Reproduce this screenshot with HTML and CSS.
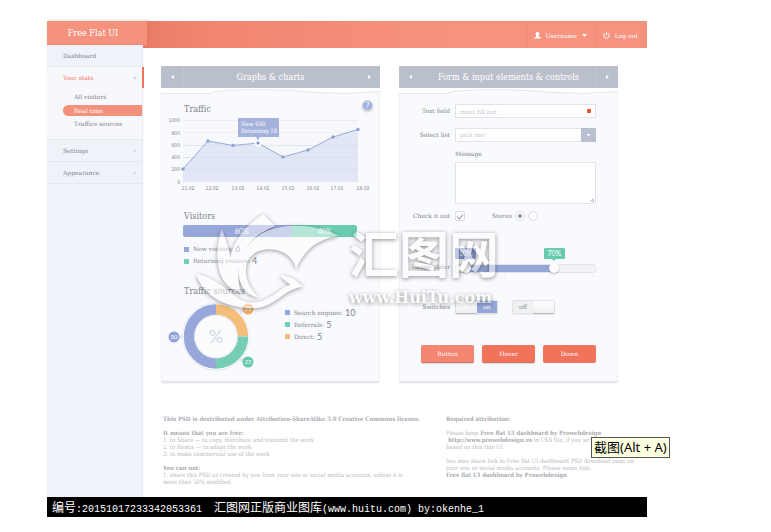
FILE: index.html
```html
<!DOCTYPE html>
<html lang="en">
<head>
<meta charset="utf-8">
<title>Free Flat UI</title>
<link rel="stylesheet" href="styles.css">
</head>
<body>
<div class="app">
  <header class="topbar">
    <a class="brand" href="#">Free Flat UI</a>
    <nav class="account" aria-label="Account">
      <a href="#">
        <svg width="7" height="7" viewBox="0 0 14 14"><path fill="#fff" d="M7 0c2.600 0 3.600 1.700 3.600 3.800S9.400 7.500 9 8.500c0 1 5 1.200 5 4.500H0c0-3.300 5-3.500 5-4.500-.400-1-1.600-2.600-1.600-4.700S4.400 0 7 0z"/></svg>
        Username
        <svg class="caret" width="5" height="3" viewBox="0 0 5 3"><path fill="#fff" d="M0 0h5L2.500 3z"/></svg>
      </a>
      <a href="#">
        <svg width="7" height="7" viewBox="0 0 14 14"><path d="M4 2.500a5.500 5.500 0 1 0 6 0M7 0v6.500" fill="none" stroke="#fff" stroke-width="2"/></svg>
        Log out
      </a>
    </nav>
  </header>

  <div class="body">
    <nav class="sidebar" aria-label="Main">
      <a class="item" href="#">Dashboard</a>
      <div class="group">
        <a class="item current" href="#">Your stats
          <svg width="4" height="3" viewBox="0 0 4 3"><path fill="#d3d6df" d="M0 0h4L2 3z"/></svg>
        </a>
        <a class="sub" href="#">All visitors</a>
        <a class="sub active" href="#">Real time</a>
        <a class="sub" href="#">Traffics sources</a>
      </div>
      <a class="item" href="#">Settings
        <svg width="3" height="4" viewBox="0 0 3 4"><path fill="#cdd1db" d="M0 0l2 2-2 2z"/></svg>
      </a>
      <a class="item" href="#">Appearance
        <svg width="3" height="4" viewBox="0 0 3 4"><path fill="#cdd1db" d="M0 0l2 2-2 2z"/></svg>
      </a>
    </nav>

    <main class="main">
      <div class="cards">
        <section class="card">
          <header class="card-head">
            <button aria-label="Previous"><svg width="3" height="4" viewBox="0 0 3 4"><path fill="#fff" d="M3 0v4L0 2z"/></svg></button>
            <h2>Graphs &amp; charts</h2>
            <button aria-label="Next"><svg width="3" height="4" viewBox="0 0 3 4"><path fill="#fff" d="M0 0v4l3-2z"/></svg></button>
          </header>
          <svg class="torn" viewBox="0 0 219 7" preserveAspectRatio="none"><path fill="#fff" d="M0 0h219v5l-30 1-30-1q-50-4-105 0l-6 1H0z"/><path fill="none" stroke="#e4e6eb" d="M0 5.500h48l6-2q50-4 100 1l30 1 35-2"/></svg>
          <div class="graphs">
            <div class="title-row">
              <h3>Traffic</h3>
              <button class="help" aria-label="Help">?</button>
            </div>
            <svg class="chart" viewBox="0 0 219 78">
              <rect x="22" y="4" width="175" height="62" fill="#f6f8fc"/>
              <path d="M22 4.500h175M22 16.500h175M22 29.500h175M22 41.500h175M22 53.500h175" stroke="#eceef4"/>
              <path d="M22 53L47 25 72 29.500 97 27 122 41 147 34 172 21 197 13.500V66H22z" fill="#dfe4f3" fill-opacity=".9"/>
              <path d="M22 41.500h175M22 53.500h175M22 29.500h175" stroke="#cfd6ea" stroke-opacity=".4"/>
              <path d="M22 53L47 25 72 29.500 97 27 122 41 147 34 172 21 197 13.500" fill="none" stroke="#9aa9d9"/>
              <g fill="#93a3d8"><circle cx="22" cy="53" r="1.800"/><circle cx="47" cy="25" r="1.800"/><circle cx="72" cy="29.500" r="1.800"/><circle cx="122" cy="41" r="1.800"/><circle cx="147" cy="34" r="1.800"/><circle cx="172" cy="21" r="1.800"/><circle cx="197" cy="13.500" r="1.800"/></g>
              <circle cx="97" cy="27" r="3.500" fill="#fff"/><circle cx="97" cy="27" r="1.500" fill="#7489cd"/>
              <path d="M77 2h41v19H99l-2 3-2-3H77z" fill="#a5b2dc"/>
              <g class="tip-text"><text x="80" y="10">New 600</text><text x="80" y="17">Returning 18</text></g>
              <g class="axis-y"><text x="19" y="6">1000</text><text x="19" y="19">800</text><text x="19" y="31">600</text><text x="19" y="43">400</text><text x="19" y="55">200</text><text x="19" y="68">0</text></g>
              <g class="axis-x"><text x="27" y="74">11.02</text><text x="51" y="74">12.02</text><text x="77" y="74">13.02</text><text x="102" y="74">14.02</text><text x="127" y="74">15.02</text><text x="152" y="74">16.02</text><text x="176" y="74">17.02</text><text x="202" y="74">18.02</text></g>
            </svg>

            <h3 class="visitors-title">Visitors</h3>
            <div class="split"><span class="new">60%</span><span class="returning">40%</span></div>
            <ul class="legend">
              <li class="blue">New visitors: <b>6</b></li>
              <li class="green">Returning visitors: <b>4</b></li>
            </ul>

            <h3 class="sources-title">Traffic sources</h3>
            <div class="sources">
              <svg class="donut" width="92" height="76" viewBox="0 0 92 76">
                <path d="M11 39h8M71 17l8-7M71 59l8 6" stroke="#e3e6ee" stroke-width="3"/>
                <circle cx="49" cy="38.500" r="34" fill="#e9ebf2"/>
                <circle cx="49" cy="38.500" r="33" fill="#fff"/>
                <g fill="none" stroke-width="10.500">
                  <path d="M49 65.500a27 27 0 0 1 0-54" stroke="#97a7da"/>
                  <path d="M49 11.500a27 27 0 0 1 27 27" stroke="#f4bd7a"/>
                  <path d="M76 38.500a27 27 0 0 1-27 27" stroke="#76cdb5"/>
                </g>
                <circle cx="49" cy="38.500" r="21.500" fill="#fafbfd" stroke="#dde0ea"/>
                <text class="percent" x="49" y="45">%</text>
                <circle cx="7" cy="39" r="5.500" fill="#93a3d8"/><circle cx="81" cy="11" r="5.500" fill="#f0ae60"/><circle cx="81" cy="64" r="5.500" fill="#62c8a9"/>
                <g class="badge"><text x="7" y="41">50</text><text x="81" y="13">25</text><text x="81" y="66">25</text></g>
              </svg>
              <ul class="legend">
                <li class="blue">Search engines: <b>10</b></li>
                <li class="green">Referrals: <b>5</b></li>
                <li class="orange">Direct: <b>5</b></li>
              </ul>
            </div>
          </div>
        </section>

        <section class="card">
          <header class="card-head">
            <button aria-label="Previous"><svg width="3" height="4" viewBox="0 0 3 4"><path fill="#fff" d="M3 0v4L0 2z"/></svg></button>
            <h2>Form &amp; input elements &amp; controls</h2>
            <button aria-label="Next"><svg width="3" height="4" viewBox="0 0 3 4"><path fill="#fff" d="M0 0v4l3-2z"/></svg></button>
          </header>
          <svg class="torn" viewBox="0 0 219 7" preserveAspectRatio="none"><path fill="#fff" d="M0 0h219v5l-30 1-30-1q-50-4-105 0l-6 1H0z"/><path fill="none" stroke="#e4e6eb" d="M0 5.500h48l6-2q50-4 100 1l30 1 35-2"/></svg>
          <form class="form">
            <div class="row">
              <label for="text">Text field</label>
              <div class="required"><input id="text" type="text" placeholder="must fill out"></div>
            </div>
            <div class="row">
              <label for="list">Select list</label>
              <div class="pick">
                <select id="list"><option>pick me!</option></select>
                <svg viewBox="0 0 15 14"><path fill="#b9bfce" d="M0 0h15v14H0z"/><path fill="#fff" d="M5.500 6h4l-2 2.500z"/></svg>
              </div>
            </div>
            <div class="message">
              <label for="message">Message</label>
              <textarea id="message"></textarea>
            </div>
            <div class="row checks">
              <label for="check">Check it out</label>
              <div class="options">
                <input id="check" type="checkbox" checked>
                <label for="stereo" class="stereo">Stereo</label>
                <input id="stereo" name="sound" type="radio" checked>
                <input name="sound" type="radio" aria-label="Mono">
              </div>
            </div>
            <div class="row range-row">
              <label for="low">Range slider</label>
              <div class="range">
                <input id="low" type="range" min="6" max="95" value="10">
                <input type="range" min="6" max="95" value="70" aria-label="Upper bound">
                <output class="low">10%</output>
                <output class="high">70%</output>
              </div>
            </div>
            <div class="row switches">
              <span class="label">Switches</span>
              <div class="options">
                <button type="button" class="switch on" role="switch" aria-checked="true"><i></i><span>on</span></button>
                <button type="button" class="switch" role="switch" aria-checked="false"><span>off</span><i></i></button>
              </div>
            </div>
            <div class="buttons">
              <button type="button" class="btn">Button</button>
              <button type="button" class="btn hover">Hover</button>
              <button type="button" class="btn down">Down</button>
            </div>
          </form>
        </section>
      </div>

      <div class="notes">
        <div>
          <p><b>This PSD is destributed under Attribution-ShareAlike 3.0 Creative Commons license.</b></p>
          <p><b>It means that you are free:</b><br>1. to Share — to copy, distribute and transmit the work<br>2. to Remix — to adapt the work<br>3. to make commercial use of the work</p>
          <p><b>You can not:</b><br>1. share this PSD as created by you from your site or social media accounts, unless it is<br>more than 50% modified.</p>
        </div>
        <div>
          <p><b>Required attribution:</b></p>
          <p>Please keep <b>Free flat UI dashboard by Prowebdesign</b><br><b>&nbsp;http://www.prowebdesign.ro</b> in CSS file, if you wr<br>based on this this UI</p>
          <p>You may share link to Free flat UI dashboard PSD download page on<br>your site or social media accounts. Please name link:<br><b>Free flat UI dashboard by Prowebdesign</b></p>
        </div>
      </div>
    </main>
  </div>

  <footer class="caption"><span class="cjk">编号</span>:20151017233342053361&nbsp; <span class="cjk">汇图网正版商业图库</span>(www.huitu.com) by:okenhe_1</footer>

  <div class="watermark">
    <svg width="170" height="110" viewBox="0 0 510 330">
      <g fill="#fff">
        <path d="M95 72C78 120 76 180 98 222C112 246 134 258 156 264C126 220 130 150 95 72z"/>
        <path d="M222 26C168 58 116 120 118 190C120 222 132 248 154 266C130 196 152 100 256 64C244 48 232 42 222 26z"/>
        <path d="M446 92C380 58 290 54 236 76C160 106 122 190 160 250C172 268 190 276 206 276C156 232 154 160 206 138C258 122 308 146 318 192C342 140 374 104 446 92z"/>
        <path d="M18 206C38 270 98 306 186 310C252 312 280 252 342 244C322 236 322 216 270 210C280 228 296 232 300 240C268 248 236 294 186 292C126 290 104 222 18 206z"/>
      </g>
    </svg>
    <div class="mark-text"><strong>汇图网</strong><span>www.HuiTu.com</span></div>
  </div>
  <div class="shot-tip" role="tooltip">截图(Alt + A)</div>
</div>
</body>
</html>
```
FILE: styles.css
```css
* { box-sizing: border-box; }
body {
  margin: 0;
  padding: 21px 124px 15px 47px;
  background: #fff;
  color: #7f828c;
  font: 6px/8px "DejaVu Serif", serif;
}
a { color: inherit; text-decoration: none; }
h2, h3, p, ul { margin: 0; padding: 0; font-weight: normal; }
h2, h3, .brand { font-family: "DejaVu Serif Condensed", "DejaVu Serif", serif; }
ul { list-style: none; }
button, input, select, textarea { font: inherit; color: inherit; margin: 0; }
button { border: 0; padding: 0; background: none; }
svg { display: block; }

.app { position: relative; }

.topbar {
  display: flex;
  justify-content: space-between;
  height: 27px;
  background: linear-gradient(90deg, #ea7c67 16%, #f28570 26%, #f6937f 70%);
  color: #fff;
}
.brand {
  width: 100px;
  height: 24px;
  background: #f5927e;
  font-size: 9px;
  line-height: 25px;
  text-align: center;
  padding-right: 8px;
  box-shadow: 2px 0 3px #e0705b66;
}
.account { display: flex; }
.account a {
  display: flex;
  align-items: center;
  gap: 5px;
  padding: 2px 9px 0 6px;
  border-left: 1px solid #f28d79;
}

.body { display: flex; }
.sidebar {
  width: 96px;
  flex: none;
  margin-top: -3px;
  background: #eff2f8;
  border-right: 1px solid #e8ebf1;
  box-shadow: 0 -1px 2px #0001;
}
.item {
  display: flex;
  align-items: center;
  justify-content: space-between;
  height: 22px;
  padding: 1px 5px 0 16px;
  border-bottom: 1px solid #e5e8ef;
}
.group { height: 73px; background: #f6f8fc; border-bottom: 1px solid #e5e8ef; }
.item.current {
  height: 21px;
  margin: 0 -2px 3px 0;
  border-bottom: 0;
  border-right: 2px solid #f2705a;
  color: #f2705a;
}
.sub { display: block; height: 11px; margin: 0 0 3px 16px; padding-left: 11px; line-height: 11px; }
.sub + .sub { margin-bottom: 2px; }
.sub.active { background: #f4917d; color: #fff; border-radius: 6px 0 0 6px; }

.main { flex: 1; min-width: 0; padding: 18px 29px 12px 18px; }
.cards { display: grid; grid-template-columns: 1fr 1fr; gap: 19px; }
.card {
  height: 316px;
  background: #f9fafd;
  border-bottom: 1px solid #e3e5ea;
  box-shadow: 0 2px 2px -1px #0002, inset 1px 0 #f1f3f7, inset -1px 0 #f1f3f7;
}
.card-head {
  display: flex;
  height: 22px;
  background: #babfcc;
  color: #fff;
}
.card-head h2 { flex: 1; text-align: center; font-size: 9px; line-height: 22px; white-space: nowrap; }
.card-head button { width: 23px; display: grid; place-items: center; }
.card-head button:first-child { border-right: 1px solid #c0c5d1; }
.card-head button:last-child { border-left: 1px solid #c0c5d1; }
.torn { width: 100%; height: 7px; }

.title-row { display: flex; justify-content: space-between; height: 21px; padding-right: 7px; }
h3 { padding-left: 23px; font-size: 9px; line-height: 12px; }
.title-row h3 { padding-top: 8px; }
.help {
  width: 11px;
  height: 11px;
  margin-top: 5px;
  border: 1px solid #d9dbe2;
  border-radius: 50%;
  background: #a2b0df;
  color: #fff;
  font: bold 7px/9px Lato, sans-serif;
  box-shadow: 0 1px 2px #0003;
}
.chart { width: 100%; height: 78px; }
.chart text { font: 5px "DejaVu Sans Condensed", "DejaVu Sans", sans-serif; fill: #7f828c; }
.chart .tip-text text { font-size: 6px; font-family: "DejaVu Serif Condensed", serif; fill: #fff; }
.axis-y { text-anchor: end; }
.axis-x { text-anchor: middle; }

.visitors-title { margin-top: 16px; }
.split {
  display: flex;
  height: 12px;
  margin: 3px 23px 6px 22px;
  border-radius: 2px;
  overflow: hidden;
  color: #fff;
  font: 7px/13px Lato, sans-serif;
  text-align: center;
}
.new { flex: 61; background: #98a7da; padding-left: 8px; }
.returning { flex: 39; background: #69ccb0; }
.graphs > .legend { padding-left: 23px; }
.legend li { display: flex; align-items: center; gap: 2px; height: 12px; white-space: nowrap; }
.legend li::before { content: ""; width: 5px; height: 5px; margin-right: 2px; background: var(--swatch); }
.legend b { font: 9px/10px Lato, sans-serif; }
.blue { --swatch: #97a7da; }
.green { --swatch: #76cdb5; }
.orange { --swatch: #f4bd7a; }
.sources-title { margin-top: 18px; }
.sources { display: flex; align-items: center; gap: 26px; padding-left: 6px; }
.sources .legend { margin-bottom: 22px; }
.donut { margin-top: 1px; overflow: visible; }
.percent { font: 18px Lato, sans-serif; fill: #d3d8e8; text-anchor: middle; }
.badge { font: 6px Lato, sans-serif; fill: #fff; text-anchor: middle; }

.form { padding: 9px 22px 0 12px; }
.row { display: grid; grid-template-columns: 39px 1fr; gap: 5px; align-items: center; margin-bottom: 10px; }
.row > label, .label { justify-self: end; white-space: nowrap; }
.row input[type="text"], .row select, textarea {
  display: block;
  width: 100%;
  height: 14px;
  padding: 0 4px;
  border: 1px solid #e0e3e9;
  border-radius: 0;
  background: #fff;
  appearance: none;
  color: #c3c5cb;
}
::placeholder { color: #c3c5cb; }
.required { display: grid; align-items: center; }
.required > input, .required::after { grid-area: 1 / 1; }
.required::after { content: ""; width: 4px; height: 4px; justify-self: end; margin-right: 5px; background: #f05233; border-radius: 1px; }
.pick { display: grid; }
.pick > * { grid-area: 1 / 1; }
.pick svg { width: 15px; height: 14px; justify-self: end; pointer-events: none; }
.message { display: grid; gap: 4px; margin: -2px 0 0 44px; }
textarea { height: 42px; resize: none; background: linear-gradient(135deg, transparent 50%, #b5b8c0 50% 60%, #fff 60% 75%, #b5b8c0 75%) no-repeat right 1px bottom 1px / 5px 5px #fff; }
.checks { margin: 7px 0 27px; }
.options { display: flex; align-items: center; }
.options input { appearance: none; width: 10px; height: 10px; border: 1px solid #d8dbe2; background: #fff; display: grid; place-items: center; }
.options input[type="checkbox"] { border-radius: 2px; }
.options input[type="checkbox"]:checked::after { content: ""; width: 3px; height: 5px; border: solid #9599a5; border-width: 0 1px 1px 0; rotate: 40deg; }
.options input[type="radio"] { border-radius: 50%; margin-left: 3px; }
.options input[type="radio"]:checked::after { content: ""; width: 4px; height: 4px; border-radius: 50%; background: #9599a5; }
.stereo { margin-left: 27px; }

.range { position: relative; height: 27px; padding-top: 16px; }
.range::before {
  content: "";
  display: block;
  height: 7px;
  border: 1px solid #e2e4e8;
  border-radius: 2px;
  background: linear-gradient(90deg, #f2f3f6 8%, #97a6d9 8% 71%, #f2f3f6 71%);
}
.range::after {
  content: "";
  display: block;
  height: 3px;
  margin: 1px 0 0 5px;
  background: repeating-linear-gradient(90deg, #eceef2 0 1px, transparent 1px 22px);
}
.range input {
  position: absolute;
  inset: 14px 0 auto;
  width: 100%;
  height: 11px;
  appearance: none;
  background: none;
  pointer-events: none;
}
.range input::-webkit-slider-thumb {
  appearance: none;
  width: 10px;
  height: 10px;
  border-radius: 50%;
  background: #fdfdfd;
  box-shadow: 0 1px 2px #0004;
  pointer-events: auto;
}
.range output {
  position: absolute;
  top: 0;
  width: 21px;
  height: 11px;
  border-radius: 1px;
  color: #fff;
  font: 7px/11px Lato, sans-serif;
  text-align: center;
}
.range output::after { content: ""; position: absolute; top: 11px; left: 8px; border: solid transparent; border-width: 2px 2px 0; border-top-color: inherit; }
.low { left: 0; background: #8192cb; border-color: #8192cb; }
.high { left: 63%; background: #67cbae; border-color: #67cbae; }
.range-row > label { padding-top: 11px; }

.switches { margin: 25px 0 31px; }
.switches .options { gap: 14px; }
.switch {
  display: flex;
  width: 43px;
  height: 14px;
  border: 1px solid #e0e2e6;
  border-radius: 2px;
  background: #f0f1f3;
  line-height: 12px;
  box-shadow: 0 1px 1px #0001;
}
.switch i { flex: 1; background: linear-gradient(#fff, #f0f0f2); box-shadow: 0 1px 1px #0003; border-radius: 1px; }
.switch span { width: 20px; text-align: center; }
.switch.on span { background: #97a6d9; color: #fff; }
.buttons { display: grid; grid-template-columns: repeat(3, 1fr); gap: 8px; margin-left: 10px; }
.btn {
  height: 18px;
  border-radius: 2px;
  border-bottom: 1px solid #d8705c;
  background: #f48571;
  color: #fff;
  box-shadow: 0 1px 1px #0002;
}
.btn.hover, .btn.down { background: #f2735c; }
.btn.down { border-bottom: 0; box-shadow: none; }

.notes {
  display: grid;
  grid-template-columns: 283px 1fr;
  margin: 33px 0 0 2px;
  font-family: "DejaVu Serif Condensed", "DejaVu Serif", serif;
  line-height: 7px;
  color: #b8b9bc;
  white-space: nowrap;
}
.notes p { margin-bottom: 7px; }
.notes b { color: #aaabaf; }
.notes p:last-child { margin-bottom: 0; }

.caption {
  position: relative;
  height: 20px;
  padding-left: 5px;
  background: #000;
  color: #fff;
  font: 10px/20px "Liberation Mono", monospace;
  white-space: nowrap;
}
.cjk { font: 12px/20px "Noto Sans CJK SC", sans-serif; }

.watermark {
  position: absolute;
  top: 184px;
  left: 143px;
  display: flex;
  opacity: .5;
  pointer-events: none;
}
.watermark svg { overflow: visible; filter: drop-shadow(0 1px 2px #333); }
.mark-text { display: grid; margin: 16px 0 0 -11px; color: #fff; text-shadow: 0 1px 4px #222; }
.mark-text strong { font: 700 50px/60px "Noto Sans CJK SC", sans-serif; }
.mark-text span { font: bold 16px/20px "DejaVu Serif", serif; }

.shot-tip {
  position: absolute;
  top: 416px;
  left: 544px;
  height: 21px;
  padding: 0 2px;
  border: 1px solid #555;
  background: #ffffe1;
  color: #000;
  font: 13px/19px "Noto Sans", "Noto Sans CJK SC", sans-serif;
  white-space: nowrap;
}
```
